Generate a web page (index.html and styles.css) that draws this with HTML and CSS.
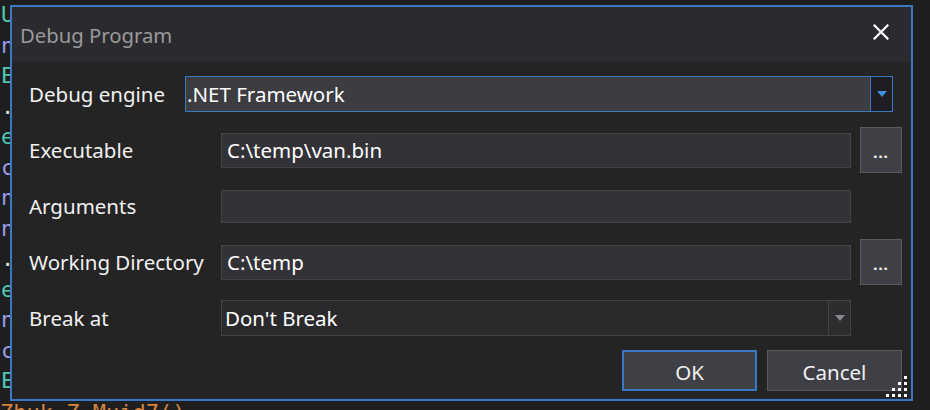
FILE: index.html
```html
<!DOCTYPE html>
<html lang="en">
<head>
<meta charset="utf-8">
<title>Debug Program</title>
<link rel="stylesheet" href="styles.css">
</head>
<body>
<div class="desktop">
  <div class="code">
    <div class="ln t">U</div>
    <div class="ln p">n</div>
    <div class="ln t">E</div>
    <div class="ln w">.</div>
    <div class="ln t">e</div>
    <div class="ln p">c</div>
    <div class="ln p">n</div>
    <div class="ln p">n</div>
    <div class="ln w">.</div>
    <div class="ln t">e</div>
    <div class="ln p">n</div>
    <div class="ln p">c</div>
    <div class="ln t">E</div>
  </div>
  <div class="code-bottom">Zhuk_Z_Muid7()</div>

  <div class="dialog">
    <div class="titlebar">
      <span class="title">Debug Program</span>
      <svg class="close" width="16" height="16" viewBox="0 0 16 16"><path d="M1.5 1.5 L14.5 14.5 M14.5 1.5 L1.5 14.5" stroke="#ffffff" stroke-width="2.2" stroke-linecap="square"/></svg>
    </div>
    <div class="body">
      <div class="row">
        <span class="label">Debug engine</span>
        <div class="combo combo-active">
          <span class="combo-text">.NET Framework</span>
          <span class="drop drop-active"><svg width="10" height="6" viewBox="0 0 10 6"><path d="M0 0 H10 L5 6 Z" fill="#3f8fe0"/></svg></span>
        </div>
      </div>
      <div class="row">
        <span class="label label-wide">Executable</span>
        <div class="field">C:\temp\van.bin</div>
        <button class="browse">...</button>
      </div>
      <div class="row">
        <span class="label label-wide">Arguments</span>
        <div class="field field-thin"></div>
        <span class="browse-space"></span>
      </div>
      <div class="row">
        <span class="label label-wide">Working Directory</span>
        <div class="field">C:\temp</div>
        <button class="browse">...</button>
      </div>
      <div class="row">
        <span class="label label-wide">Break at</span>
        <div class="combo combo-plain">
          <span class="combo-text">Don't Break</span>
          <span class="drop drop-plain"><svg width="10" height="6" viewBox="0 0 10 6"><path d="M0 0 H10 L5 6 Z" fill="#8a8a8e"/></svg></span>
        </div>
        <span class="browse-space"></span>
      </div>
      <div class="buttons">
        <button class="btn btn-default">OK</button>
        <button class="btn">Cancel</button>
      </div>
    </div>
    <svg class="grip" width="21" height="21" viewBox="0 0 21 21">
      <rect x="18" y="0" width="3" height="3" fill="#fff"/>
      <rect x="12" y="6" width="3" height="3" fill="#fff"/><rect x="18" y="6" width="3" height="3" fill="#fff"/>
      <rect x="6" y="12" width="3" height="3" fill="#fff"/><rect x="12" y="12" width="3" height="3" fill="#fff"/><rect x="18" y="12" width="3" height="3" fill="#fff"/>
      <rect x="0" y="18" width="3" height="3" fill="#fff"/><rect x="6" y="18" width="3" height="3" fill="#fff"/><rect x="12" y="18" width="3" height="3" fill="#fff"/><rect x="18" y="18" width="3" height="3" fill="#fff"/>
    </svg>
  </div>
</div>
</body>
</html>
```

FILE: styles.css
```css
* { box-sizing: border-box; }
html, body {
  margin: 0;
  padding: 0;
  background: #1e1e1e;
  width: 930px;
  height: 410px;
  overflow: hidden;
  font-family: "Noto Sans", "Open Sans", sans-serif;
}
.desktop {
  position: relative;
  width: 930px;
  height: 410px;
  background: #1e1e1e;
}
.code {
  position: absolute;
  left: 1px;
  top: 0;
  font-family: "DejaVu Sans Mono", monospace;
  font-size: 22px;
  line-height: 30.5px;
}
.ln.t { color: #4ec9b0; }
.ln.p { color: #9f9be8; }
.ln.w { color: #dcdcdc; }
.code-bottom {
  position: absolute;
  left: 0;
  top: 400px;
  font-family: "DejaVu Sans Mono", monospace;
  font-size: 22px;
  line-height: 26px;
  color: #d7843e;
  white-space: nowrap;
}
.dialog {
  position: absolute;
  left: 10px;
  top: 5px;
  width: 903px;
  height: 396px;
  border: 2px solid #3a78c2;
  background: #242424;
  display: flex;
  flex-direction: column;
}
.titlebar {
  height: 55px;
  background: #2b2b2f;
  display: flex;
  align-items: center;
  justify-content: space-between;
  padding: 0 22px 0 8px;
}
.title {
  color: #9a9a9a;
  font-size: 20.3px;
}
.close { display: block; margin-top: -6px; }
.body {
  flex: 1;
  display: flex;
  flex-direction: column;
  padding: 4px 9px 8px 17px;
}
.row {
  height: 56px;
  display: flex;
  align-items: center;
}
.label {
  color: #f1f1f1;
  font-size: 20.5px;
  width: 156px;
  white-space: nowrap;
}
.label-wide { width: 192px; }
.combo {
  display: flex;
  align-items: stretch;
  height: 36px;
}
.combo-active {
  width: 708px;
  border: 1px solid #3a78c2;
  background: #3c3c41;
}
.combo-plain {
  width: 630px;
  border: 1px solid #434346;
  background: #2a2a2c;
}
.combo-text {
  flex: 1;
  color: #ffffff;
  font-size: 20.5px;
  display: flex;
  align-items: center;
  padding-left: 1px;
  white-space: nowrap;
}
.combo-plain .combo-text { padding-left: 3px; }
.drop {
  width: 22px;
  display: flex;
  align-items: center;
  justify-content: center;
}
.drop-active {
  background: #1e1e22;
  border-left: 1px solid #3a78c2;
}
.drop-plain {
  background: #2d2d30;
  border-left: 1px solid #434346;
}
.field {
  width: 630px;
  height: 35px;
  border: 1px solid #434346;
  background: #333337;
  color: #ffffff;
  font-size: 20.5px;
  display: flex;
  align-items: center;
  padding-left: 5px;
  white-space: nowrap;
}
.field-thin { height: 33px; }
.browse {
  margin-left: 9px;
  width: 42px;
  height: 46px;
  background: #3f3f46;
  border: 1px solid #5a5a5e;
  color: #ffffff;
  font-family: "Noto Sans", sans-serif;
  font-size: 15px;
  font-weight: bold;
  letter-spacing: 1px;
  padding: 4px 0 0 0;
  line-height: 1;
}
.browse-space { width: 51px; }
.buttons {
  margin-top: 4px;
  display: flex;
  justify-content: flex-end;
  gap: 10px;
}
.btn {
  width: 135px;
  height: 41px;
  background: #3f3f46;
  border: 1px solid #5a5a5e;
  color: #f1f1f1;
  font-family: "Noto Sans", sans-serif;
  font-size: 20.5px;
  padding: 2px 0 0 0;
}
.btn-default {
  border: 2px solid #3a78c2;
}
.grip {
  position: absolute;
  right: 4px;
  bottom: 2px;
}
```
